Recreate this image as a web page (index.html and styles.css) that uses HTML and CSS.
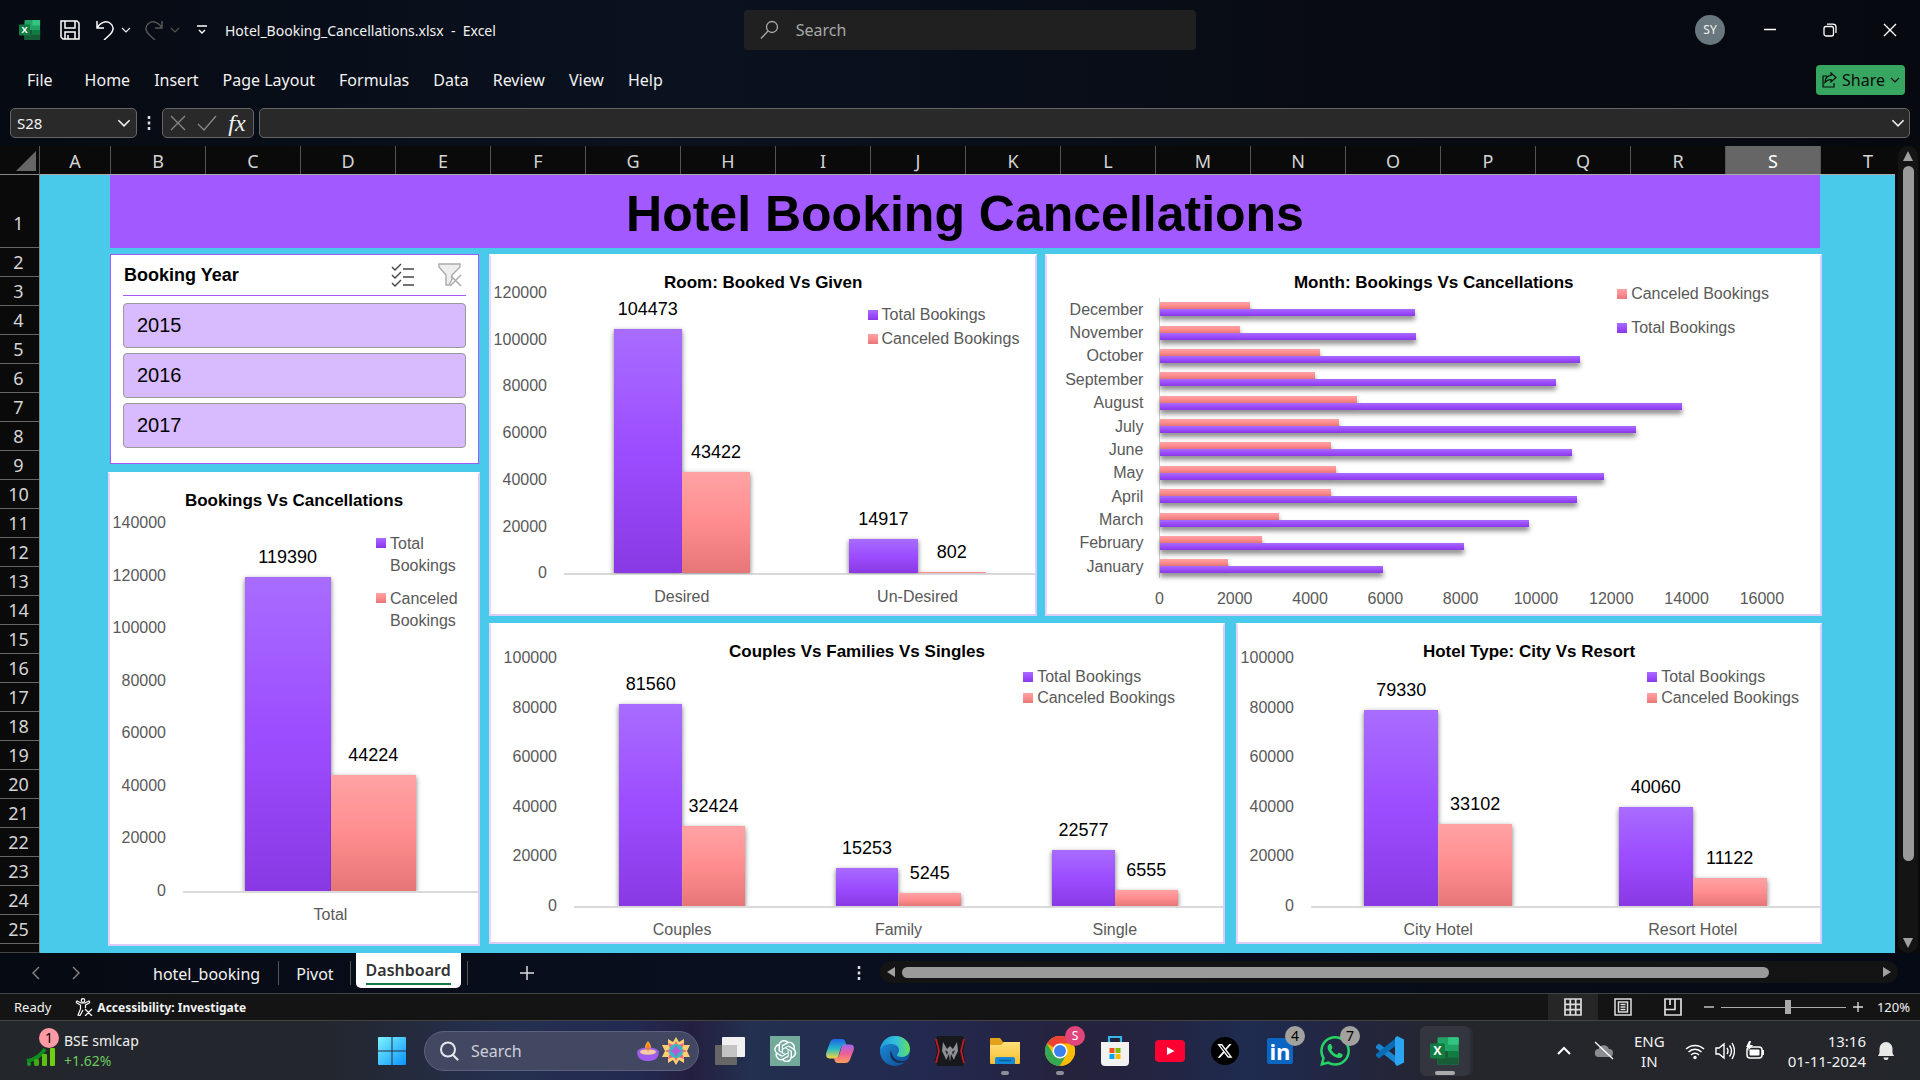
FILE: index.html
```html
<!DOCTYPE html>
<html lang="en">
<head>
<meta charset="utf-8">
<meta name="viewport" content="width=device-width, initial-scale=1">
<title>Hotel_Booking_Cancellations.xlsx - Excel</title>
<link rel="stylesheet" href="styles.css">
</head>
<body>
<svg class="defs" aria-hidden="true">
  <defs>
    <linearGradient id="gWin" x1="0" y1="0" x2="1" y2="1"><stop offset="0" stop-color="#7df3ff"/><stop offset="1" stop-color="#0a93ff"/></linearGradient>
    <linearGradient id="gEdge" x1="0" y1="0" x2="1" y2="0"><stop offset="0" stop-color="#1b9de2"/><stop offset=".55" stop-color="#35c1d8"/><stop offset="1" stop-color="#5fe05a"/></linearGradient>
    <linearGradient id="gEdge2" x1="0" y1="0" x2="1" y2="1"><stop offset="0" stop-color="#1f8fdc"/><stop offset="1" stop-color="#0b4a92"/></linearGradient>
    <linearGradient id="gCopA" x1="0" y1="0" x2="0" y2="1"><stop offset="0" stop-color="#1e66e8"/><stop offset=".5" stop-color="#26b8c8"/><stop offset="1" stop-color="#f5d63a"/></linearGradient>
    <linearGradient id="gCopB" x1="0" y1="0" x2="0" y2="1"><stop offset="0" stop-color="#a264f0"/><stop offset=".5" stop-color="#ee5f94"/><stop offset="1" stop-color="#ffa05c"/></linearGradient>
    <linearGradient id="gFold" x1="0" y1="0" x2="0" y2="1"><stop offset="0" stop-color="#ffe07a"/><stop offset="1" stop-color="#f8bd2e"/></linearGradient>
    <symbol id="excel" viewBox="0 0 24 24">
      <rect x="6" y="1" width="17" height="22" rx="1" fill="#21a366"/>
      <path d="M14.500 1H22a1 1 0 0 1 1 1v5h-8.500z" fill="#33c481"/>
      <path d="M6 12h8.500v5H6z" fill="#185c37"/><path d="M14.500 12H23v5h-8.500z" fill="#107c41"/>
      <path d="M6 17h17v5a1 1 0 0 1-1 1H7a1 1 0 0 1-1-1z" fill="#185c37"/>
      <rect x="0" y="6" width="12" height="12" rx="1" fill="#107c41"/>
      <text x="6" y="15.500" text-anchor="middle" font-family="Open Sans, sans-serif" font-size="10" font-weight="700" fill="#fff">X</text>
    </symbol>
    <symbol id="chev" viewBox="0 0 10 10"><path d="M1 3 5 7l4-4" fill="none" stroke="currentColor" stroke-width="1.100"/></symbol>
  </defs>
</svg>

<header class="titlebar">
  <div class="quick">
    <svg class="i22" viewBox="0 0 24 24" aria-hidden="true"><use href="#excel"/></svg>
    <button class="tool save" aria-label="Save"><svg class="i20" viewBox="0 0 20 20"><path d="M1 1h16l2 2v16H3l-2-2zM5 1v7h10V1M5 19v-7h10v7M8 19v-4" fill="none" stroke="#fff" stroke-width="1.500"/></svg></button>
    <button class="tool undo" aria-label="Undo"><svg class="i20" viewBox="0 0 20 20"><path d="M2 1v7h7M2 8C5 2.500 11 0 15.500 3.500S18 12 14.500 15L9 20" fill="none" stroke="#fff" stroke-width="1.500"/></svg><svg class="i10"><use href="#chev"/></svg></button>
    <button class="tool redo" aria-label="Redo" disabled><svg class="i20" viewBox="0 0 20 20"><path d="M18 1v7h-7M18 8C15 2.500 9 0 4.500 3.500S2 12 5.500 15l5.500 5" fill="none" stroke="currentColor" stroke-width="1.500"/></svg><svg class="i10"><use href="#chev"/></svg></button>
    <button class="tool more" aria-label="Customize toolbar"><svg class="i10" viewBox="0 0 10 10"><path d="M0 1h10M2 5l3 3 3-3" fill="none" stroke="#fff" stroke-width="1.400"/></svg></button>
    <h1 class="doc">Hotel_Booking_Cancellations.xlsx&nbsp; -&nbsp; Excel</h1>
  </div>
  <label class="search">
    <svg class="i20" viewBox="0 0 20 20"><circle cx="12" cy="7" r="5.500" fill="none" stroke="#aaa" stroke-width="1.300"/><path d="M8 11 1 18.500" stroke="#aaa" stroke-width="1.300"/></svg>
    <input type="text" placeholder="Search" aria-label="Search">
  </label>
  <div class="window">
    <span class="avatar">SY</span>
    <button aria-label="Minimize"><svg class="i14" viewBox="0 0 14 14"><path d="M1 6.500h12" stroke="#fff" stroke-width="1.500"/></svg></button>
    <button aria-label="Restore"><svg class="i14" viewBox="0 0 14 14"><rect x="1" y="3.500" width="9.500" height="9.500" rx="2" fill="none" stroke="#fff" stroke-width="1.300"/><path d="M4 1.200h6A3 3 0 0 1 13 4v6" fill="none" stroke="#fff" stroke-width="1.300"/></svg></button>
    <button aria-label="Close"><svg class="i14" viewBox="0 0 14 14"><path d="m1 1 12 12M13 1 1 13" stroke="#fff" stroke-width="1.400"/></svg></button>
  </div>
</header>

<nav class="ribbon">
  <a href="#file" class="file">File</a><a href="#home">Home</a><a href="#insert">Insert</a><a href="#layout">Page Layout</a><a href="#formulas">Formulas</a><a href="#data">Data</a><a href="#review">Review</a><a href="#view">View</a><a href="#help">Help</a>
  <button class="share"><svg class="i16" viewBox="0 0 16 16"><path d="M6 4H2v11h11v-4M10 1l5 4.500L10 10V7.500c-3 0-4.500 1-6 3C4 6 6.500 3.500 10 3.500z" fill="none" stroke="#0a0a0a" stroke-width="1.200"/></svg>Share<svg class="i10"><use href="#chev"/></svg></button>
</nav>

<div class="formula">
  <label class="namebox"><input type="text" value="S28" aria-label="Name box"><svg class="i14"><use href="#chev"/></svg></label>
  <svg class="dots" viewBox="0 0 4 16" aria-hidden="true"><path d="M2 1v3M2 6.500v3M2 12v3" stroke="#ddd" stroke-width="2.500"/></svg>
  <div class="fxbox">
    <button aria-label="Cancel"><svg class="i16" viewBox="0 0 16 16"><path d="m1 1 14 14M15 1 1 15" stroke="#888" stroke-width="1.300"/></svg></button>
    <button aria-label="Enter"><svg class="i20" viewBox="0 0 20 20"><path d="m1 11 6 6L19 3" fill="none" stroke="#888" stroke-width="1.300"/></svg></button>
    <button class="fx" aria-label="Insert function">fx</button>
  </div>
  <label class="fbar"><input type="text" aria-label="Formula bar"><svg class="i14"><use href="#chev"/></svg></label>
</div>

<main class="workspace">
  <div class="corner"><svg viewBox="0 0 20 20" class="i20"><path d="M20 0v20H0z" fill="#666"/></svg></div>
  <div class="cols"><span>A</span><span>B</span><span>C</span><span>D</span><span>E</span><span>F</span><span>G</span><span>H</span><span>I</span><span>J</span><span>K</span><span>L</span><span>M</span><span>N</span><span>O</span><span>P</span><span>Q</span><span>R</span><span class="on">S</span><span class="last">T</span></div>
  <div class="rows"><span class="first">1</span><span>2</span><span>3</span><span>4</span><span>5</span><span>6</span><span>7</span><span>8</span><span>9</span><span>10</span><span>11</span><span>12</span><span>13</span><span>14</span><span>15</span><span>16</span><span>17</span><span>18</span><span>19</span><span>20</span><span>21</span><span>22</span><span>23</span><span>24</span><span>25</span><span>26</span></div>

  <section class="sheet">
    <h2 class="banner">Hotel Booking Cancellations</h2>
    <div class="board">
      <div class="left">
        <section class="slicer">
          <header><h3>Booking Year</h3>
            <button aria-label="Multi-select"><svg class="i24" viewBox="0 0 24 24"><path d="m1 4 3 3 6-6M1 12l3 3 6-6M1 20l3 3 6-6M12 6h11M12 14h11M12 22h11" fill="none" stroke="#444" stroke-width="1.400"/></svg></button>
            <button aria-label="Clear filter"><svg class="i24" viewBox="0 0 24 24"><path d="M1 1h21v3l-8 8v4l-3 6H8V12L1 4z" fill="#eee" stroke="#aaa" stroke-width="1.400"/><path d="m13 13 10 10M23 12 12 23" stroke="#aaa" stroke-width="1.500"/></svg></button>
          </header>
          <button class="year">2015</button><button class="year">2016</button><button class="year">2017</button>
        </section>
        <figure class="chart tall">
          <figcaption>Bookings Vs Cancellations</figcaption>
          <ul class="legend"><li class="t">Total Bookings</li><li class="c">Canceled Bookings</li></ul>
          <div class="plot">
            <div class="axis"><span>140000</span><span>120000</span><span>100000</span><span>80000</span><span>60000</span><span>40000</span><span>20000</span><span>0</span></div>
            <div class="area">
              <div class="group"><div class="col"><b>119390</b><i class="bar t" style="height:85.280%"></i></div><div class="col"><b>44224</b><i class="bar c" style="height:31.590%"></i></div></div>
            </div>
            <div class="cats"><span>Total</span></div>
          </div>
        </figure>
      </div>
      <div class="right">
        <div class="row top">
          <figure class="chart room">
            <figcaption>Room: Booked Vs Given</figcaption>
            <ul class="legend"><li class="t">Total Bookings</li><li class="c">Canceled Bookings</li></ul>
            <div class="plot">
              <div class="axis"><span>120000</span><span>100000</span><span>80000</span><span>60000</span><span>40000</span><span>20000</span><span>0</span></div>
              <div class="area">
                <div class="group"><div class="col"><b>104473</b><i class="bar t" style="height:87.060%"></i></div><div class="col"><b>43422</b><i class="bar c" style="height:36.190%"></i></div></div>
                <div class="group"><div class="col"><b>14917</b><i class="bar t" style="height:12.430%"></i></div><div class="col"><b>802</b><i class="bar c" style="height:.670%"></i></div></div>
              </div>
              <div class="cats"><span>Desired</span><span>Un-Desired</span></div>
            </div>
          </figure>
          <figure class="chart month">
            <figcaption>Month: Bookings Vs Cancellations</figcaption>
            <ul class="legend"><li class="c">Canceled Bookings</li><li class="t">Total Bookings</li></ul>
            <div class="hplot">
              <div class="months"><span>December</span><span>November</span><span>October</span><span>September</span><span>August</span><span>July</span><span>June</span><span>May</span><span>April</span><span>March</span><span>February</span><span>January</span></div>
              <div class="hbars">
                <div><i class="hb c" style="width:14.820%"></i><i class="hb t" style="width:42.380%"></i></div>
                <div><i class="hb c" style="width:13.260%"></i><i class="hb t" style="width:42.460%"></i></div>
                <div><i class="hb c" style="width:26.540%"></i><i class="hb t" style="width:69.750%"></i></div>
                <div><i class="hb c" style="width:25.730%"></i><i class="hb t" style="width:65.680%"></i></div>
                <div><i class="hb c" style="width:32.740%"></i><i class="hb t" style="width:86.730%"></i></div>
                <div><i class="hb c" style="width:29.640%"></i><i class="hb t" style="width:79.130%"></i></div>
                <div><i class="hb c" style="width:28.340%"></i><i class="hb t" style="width:68.370%"></i></div>
                <div><i class="hb c" style="width:29.230%"></i><i class="hb t" style="width:73.690%"></i></div>
                <div><i class="hb c" style="width:28.280%"></i><i class="hb t" style="width:69.310%"></i></div>
                <div><i class="hb c" style="width:19.680%"></i><i class="hb t" style="width:61.210%"></i></div>
                <div><i class="hb c" style="width:16.850%"></i><i class="hb t" style="width:50.430%"></i></div>
                <div><i class="hb c" style="width:11.290%"></i><i class="hb t" style="width:37.060%"></i></div>
              </div>
              <div class="scale"><span>0</span><span>2000</span><span>4000</span><span>6000</span><span>8000</span><span>10000</span><span>12000</span><span>14000</span><span>16000</span></div>
            </div>
          </figure>
        </div>
        <div class="row bottom">
          <figure class="chart low wide">
            <figcaption>Couples Vs Families Vs Singles</figcaption>
            <ul class="legend"><li class="t">Total Bookings</li><li class="c">Canceled Bookings</li></ul>
            <div class="plot">
              <div class="axis"><span>100000</span><span>80000</span><span>60000</span><span>40000</span><span>20000</span><span>0</span></div>
              <div class="area">
                <div class="group"><div class="col"><b>81560</b><i class="bar t" style="height:81.560%"></i></div><div class="col"><b>32424</b><i class="bar c" style="height:32.420%"></i></div></div>
                <div class="group"><div class="col"><b>15253</b><i class="bar t" style="height:15.250%"></i></div><div class="col"><b>5245</b><i class="bar c" style="height:5.250%"></i></div></div>
                <div class="group"><div class="col"><b>22577</b><i class="bar t" style="height:22.580%"></i></div><div class="col"><b>6555</b><i class="bar c" style="height:6.560%"></i></div></div>
              </div>
              <div class="cats"><span>Couples</span><span>Family</span><span>Single</span></div>
            </div>
          </figure>
          <figure class="chart low hotel">
            <figcaption>Hotel Type: City Vs Resort</figcaption>
            <ul class="legend"><li class="t">Total Bookings</li><li class="c">Canceled Bookings</li></ul>
            <div class="plot">
              <div class="axis"><span>100000</span><span>80000</span><span>60000</span><span>40000</span><span>20000</span><span>0</span></div>
              <div class="area">
                <div class="group"><div class="col"><b>79330</b><i class="bar t" style="height:79.330%"></i></div><div class="col"><b>33102</b><i class="bar c" style="height:33.100%"></i></div></div>
                <div class="group"><div class="col"><b>40060</b><i class="bar t" style="height:40.060%"></i></div><div class="col"><b>11122</b><i class="bar c" style="height:11.120%"></i></div></div>
              </div>
              <div class="cats"><span>City Hotel</span><span>Resort Hotel</span></div>
            </div>
          </figure>
        </div>
      </div>
    </div>
  </section>

  <div class="vscroll"><svg class="i12" viewBox="0 0 12 12"><path d="m6 1 5 10H1z" fill="#a0a0a0"/></svg><span class="thumb"></span><svg class="i12" viewBox="0 0 12 12"><path d="m6 11 5-10H1z" fill="#a0a0a0"/></svg></div>
</main>

<nav class="tabs">
  <div class="tabnav">
    <button aria-label="Previous sheet"><svg class="i14" viewBox="0 0 14 14"><path d="M10 1 4 7l6 6" fill="none" stroke="#888" stroke-width="1.400"/></svg></button>
    <button aria-label="Next sheet"><svg class="i14" viewBox="0 0 14 14"><path d="m4 1 6 6-6 6" fill="none" stroke="#888" stroke-width="1.400"/></svg></button>
  </div>
  <a href="#hotel_booking">hotel_booking</a><a href="#pivot">Pivot</a><a href="#dashboard" class="active"><span>Dashboard</span></a>
  <button class="add" aria-label="New sheet"><svg class="i14" viewBox="0 0 14 14"><path d="M7 0v14M0 7h14" stroke="#ddd" stroke-width="1.500"/></svg></button>
  <svg class="dots grip" viewBox="0 0 4 16" aria-hidden="true"><path d="M2 1v3M2 6.500v3M2 12v3" stroke="#ddd" stroke-width="2.500"/></svg>
  <div class="hscroll"><svg class="i12" viewBox="0 0 12 12"><path d="m2 6 8-5v10z" fill="#a0a0a0"/></svg><span class="track"><span class="thumb"></span></span><svg class="i12" viewBox="0 0 12 12"><path d="M10 6 2 1v10z" fill="#a0a0a0"/></svg></div>
</nav>

<footer class="status">
  <span>Ready</span>
  <button class="access"><svg class="i18" viewBox="0 0 18 18"><circle cx="8" cy="2.500" r="1.800" fill="none" stroke="#fff" stroke-width="1.200"/><path d="M1 4.500 5.500 7v4L3 17l2 .5 3-5.500M15 4.500 10.500 7v3M1 4.500 2 3l4 2h4l4-2 1 1.500M10 11l7 7M17 11l-7 7" fill="none" stroke="#fff" stroke-width="1.200"/></svg>Accessibility: Investigate</button>
  <div class="views">
    <button class="on" aria-label="Normal view"><svg class="i18" viewBox="0 0 18 18"><path d="M1 1h16v16H1zM1 6.300h16M1 11.700h16M6.300 1v16M11.700 1v16" fill="none" stroke="#ddd" stroke-width="1.700"/></svg></button>
    <button aria-label="Page layout view"><svg class="i18" viewBox="0 0 18 18"><path d="M1 1h16v16H1zM4.500 4h9v10h-9zM6.500 6.500h5M6.500 9h5M6.500 11.500h5" fill="none" stroke="#ddd" stroke-width="1.500"/></svg></button>
    <button aria-label="Page break view"><svg class="i18" viewBox="0 0 18 18"><path d="M1 1h16v16H1zM1 11.500h10V1M6 1v6" fill="none" stroke="#ddd" stroke-width="1.700"/></svg></button>
  </div>
  <div class="zoom">
    <button aria-label="Zoom out"><svg class="i10" viewBox="0 0 10 10"><path d="M0 5h10" stroke="#ddd" stroke-width="1.300"/></svg></button>
    <input type="range" min="0" max="100" value="54" aria-label="Zoom">
    <button aria-label="Zoom in"><svg class="i10" viewBox="0 0 10 10"><path d="M0 5h10M5 0v10" stroke="#ddd" stroke-width="1.300"/></svg></button>
  </div>
  <span class="pct">120%</span>
</footer>

<div class="taskbar">
  <a href="#widgets" class="stock">
    <span class="app"><svg viewBox="0 0 32 32" class="i32"><path d="M2 26q12-2 18-12" fill="none" stroke="#128c1c" stroke-width="4"/><rect x="2" y="27" width="4" height="4" rx="2" fill="#14a01c"/><rect x="9" y="24" width="5" height="7" rx="2" fill="#3fae12"/><rect x="17" y="19" width="5" height="12" rx="1" fill="#5cc010"/><rect x="25" y="13" width="5" height="18" rx="1" fill="#6fd010"/></svg><em class="badge pink">1</em></span>
    <span class="quote"><span>BSE smlcap</span><span class="up">+1.62%</span></span>
  </a>
  <div class="dock">
    <button class="app start" aria-label="Start"><svg class="i30" viewBox="0 0 30 30"><path d="M1 2a1 1 0 0 1 1-1h12.500v13.500H1zM15.500 1H28a1 1 0 0 1 1 1v12.500H15.500zM1 15.500h13.500V29H2a1 1 0 0 1-1-1zM15.500 15.500H29V28a1 1 0 0 1-1 1H15.500z" fill="url(#gWin)"/></svg></button>
    <label class="tsearch"><svg class="i20" viewBox="0 0 20 20"><circle cx="9" cy="8.500" r="7" fill="none" stroke="#e6e6ec" stroke-width="2"/><path d="m14 14 4.500 4.500" stroke="#e6e6ec" stroke-width="2.200" stroke-linecap="round"/></svg>
      <input type="text" placeholder="Search" aria-label="Search Windows">
      <svg class="diya" viewBox="0 0 54 28" aria-hidden="true"><path d="M12 4c4 5 4 9 0 10-4-1-4-5 0-10z" fill="#ffa52c"/><ellipse cx="12" cy="15" rx="11" ry="4.500" fill="#9a63e0"/><ellipse cx="12" cy="15" rx="8" ry="2.700" fill="#f7cba6"/><path d="M1 16c1 6 5 8 11 8s10-2 11-8c-5 4-17 4-22 0z" fill="#a45cf0"/><path d="M12 6c2 4 2 7 0 8-2-1-2-4 0-8z" fill="#ff7a1c"/>
        <path d="m40 0 3 5 5-3 0 6 6 0-3 6 3 6-6 0 0 6-5-3-3 5-3-5-5 3 0-6-6 0 3-6-3-6 6 0 0-6 5 3z" fill="#ffd071"/><path d="m40 4 2 4 6-2-2 6 5 2-5 2 2 6-6-2-2 4-2-4-6 2 2-6-5-2 5-2-2-6 6 2z" fill="#f0688a"/><circle cx="40" cy="14" r="7" fill="#32b9c4"/><path d="m40 8 2 4 4 2-4 2-2 4-2-4-4-2 4-2z" fill="#d050c8"/><circle cx="40" cy="14" r="3" fill="#b45ce0"/></svg></label>
    <button class="app" aria-label="Task view"><svg class="i30" viewBox="0 0 30 30"><rect x="0" y="9" width="22" height="20" rx="1" fill="#666"/><rect x="7" y="1" width="23" height="20" rx="1" fill="#f1f1f1"/><path d="M7 9h15v12H7z" fill="#c4c4c4"/></svg></button>
    <button class="app" aria-label="ChatGPT"><svg class="i30" viewBox="0 0 30 30"><path d="M0 0h30v30H0z" fill="#74aa9c"/><g transform="translate(4.200 4) scale(.92)"><path fill="#fff" d="M22.282 9.821a5.985 5.985 0 0 0-.516-4.911 6.046 6.046 0 0 0-6.510-2.900A6.065 6.065 0 0 0 4.981 4.182a5.985 5.985 0 0 0-3.998 2.900 6.046 6.046 0 0 0 .743 7.097 5.980 5.980 0 0 0 .511 4.911 6.051 6.051 0 0 0 6.515 2.900A5.985 5.985 0 0 0 13.260 24a6.056 6.056 0 0 0 5.772-4.206 5.989 5.989 0 0 0 3.998-2.900 6.056 6.056 0 0 0-.748-7.073zm-9.022 12.608a4.476 4.476 0 0 1-2.876-1.041l.142-.080 4.778-2.758a.795.795 0 0 0 .393-.681v-6.737l2.020 1.169a.071.071 0 0 1 .038.052v5.583a4.504 4.504 0 0 1-4.495 4.494zm-9.661-4.125a4.471 4.471 0 0 1-.535-3.014l.142.085 4.783 2.758a.771.771 0 0 0 .781 0l5.843-3.369v2.332a.080.080 0 0 1-.033.062L9.740 19.950a4.499 4.499 0 0 1-6.141-1.646zM2.341 7.896a4.485 4.485 0 0 1 2.366-1.973V11.600a.766.766 0 0 0 .388.677l5.814 3.354-2.020 1.169a.076.076 0 0 1-.071 0l-4.830-2.787A4.504 4.504 0 0 1 2.341 7.872zm16.596 3.856L13.104 8.364 15.119 7.200a.076.076 0 0 1 .071 0l4.830 2.791a4.494 4.494 0 0 1-.677 8.104v-5.677a.790.790 0 0 0-.407-.667zm2.011-3.023l-.142-.085-4.774-2.782a.776.776 0 0 0-.785 0L9.409 9.230V6.897a.066.066 0 0 1 .028-.062l4.830-2.787a4.499 4.499 0 0 1 6.680 4.660zM8.307 12.863l-2.020-1.164a.080.080 0 0 1-.038-.057V6.074a4.499 4.499 0 0 1 7.376-3.454l-.142.081L8.704 5.459a.795.795 0 0 0-.393.681zm1.098-2.365l2.602-1.500 2.607 1.500v2.999l-2.597 1.500-2.607-1.500Z"/></g></svg></button>
    <button class="app" aria-label="Copilot"><svg class="i30" viewBox="0 0 30 30"><path d="M10 3h7c2 0 3 1 3.500 3l1 3h-2c-2 0-3 1-4 4l-2 7c-.5 2-1.500 2.500-3.500 2.500H5C1 22.500.5 19 1.500 16L5 6.500C6 4 7.500 3 10 3z" fill="url(#gCopA)"/><path d="M20 27h-7c-2 0-3-1-3.500-3l-.5-2h1.500c2 0 3-1 4-4l2-7c.500-2 1.500-2.500 3.500-2.500H25c4 0 4.500 3 3.500 6L25 23.500c-1 2.500-2.500 3.500-5 3.500z" fill="url(#gCopB)"/></svg></button>
    <button class="app" aria-label="Edge"><svg class="i30" viewBox="0 0 30 30"><circle cx="15" cy="15" r="15" fill="url(#gEdge2)"/><path d="M0 14C1 6 7 0 15 0c9 0 15 6 15 13 0 5-4 8-8 8-3 0-5-1-5-2s2-2 2-5c0-4-4-6-8-6-5 0-9 2-11 6z" fill="url(#gEdge)"/><path d="M11 14c-2 5 0 12 8 13 4 .5 7-1 8-3-2 1-4 1.500-7 1-5-1-8-4-9-11z" fill="#1b2a52"/></svg></button>
    <button class="app" aria-label="PredatorSense"><svg class="i30" viewBox="0 0 30 30"><path d="M2 0h26l2 6-2 9 2 9-2 6H2l-2-6 2-9-2-9z" fill="#17181c"/><path d="m1 3 3 12-3 12M29 3l-3 12 3 12" stroke="#c21a22" stroke-width="1.800" fill="none"/><path d="m8 6 4 7 3-3 3 3 4-7 1 9-3 6-1 3-3-6-1 8-1-8-3 6-1-3-3-6z" fill="#8d9096"/><path d="m10 14 3 2-1 3zM20 14l-3 2 1 3z" fill="#222"/></svg></button>
    <button class="app run" aria-label="File Explorer"><svg class="i30" viewBox="0 0 30 30"><path d="M0 3a1 1 0 0 1 1-1h9l3 4h16a1 1 0 0 1 1 1v4H0z" fill="#e3a21a"/><path d="M0 9h11l3-3h16v21a1 1 0 0 1-1 1H1a1 1 0 0 1-1-1z" fill="url(#gFold)"/><path d="M5 28v-5a2 2 0 0 1 2-2h16a2 2 0 0 1 2 2v5z" fill="#1489d8"/><path d="M9 24.500h12" stroke="#0b5c9c" stroke-width="1.500"/></svg></button>
    <button class="app run" aria-label="Chrome"><svg class="i30" viewBox="0 0 30 30"><circle cx="15" cy="15" r="15" fill="#fbbc05"/><path d="M15 15 2 7.500A15 15 0 0 1 28 7.500H15z" fill="#ea4335"/><path d="M15 15 8.500 18.800 2 7.500A15 15 0 0 0 15 30l6.500-11.200z" fill="#34a853"/><path d="M28 7.500A15 15 0 0 1 15 30l6.500-11.200L22 9z" fill="#fbbc05"/><circle cx="15" cy="15" r="7.500" fill="#fff"/><circle cx="15" cy="15" r="6" fill="#3b82f0"/></svg><em class="badge rose">S</em></button>
    <button class="app" aria-label="Microsoft Store"><svg class="i30" viewBox="0 0 30 30"><path d="M9 6V1h12v5" fill="none" stroke="#35b5ea" stroke-width="2.200"/><path d="M1 6h28v20a4 4 0 0 1-4 4H5a4 4 0 0 1-4-4z" fill="#f2f2f2"/><path d="M9.500 12h5v5h-5z" fill="#f25022"/><path d="M15.500 12h5v5h-5z" fill="#7fba00"/><path d="M9.500 18h5v5h-5z" fill="#00a4ef"/><path d="M15.500 18h5v5h-5z" fill="#ffb900"/></svg></button>
    <button class="app" aria-label="YouTube"><svg class="i30" viewBox="0 0 30 30"><rect y="4" width="30" height="22" rx="4" fill="#f03"/><path d="m12 11 7.500 4-7.500 4z" fill="#fff"/></svg></button>
    <button class="app" aria-label="X"><svg class="i30" viewBox="0 0 30 30"><circle cx="15" cy="15" r="14" fill="#000"/><g transform="translate(6.500 6.500) scale(.7)"><path d="M18.244 2.250h3.308l-7.227 8.260 8.502 11.240H16.170l-5.214-6.817L4.990 21.750H1.680l7.730-8.835L1.254 2.250H8.080l4.713 6.231zm-1.161 17.520h1.833L7.084 4.126H5.117z" fill="#fff"/></g></svg></button>
    <button class="app" aria-label="LinkedIn"><svg class="i30" viewBox="0 0 30 30"><rect x="2" y="2" width="26" height="26" rx="2" fill="#0a66c2"/><text x="15" y="24" text-anchor="middle" font-family="Open Sans, sans-serif" font-weight="700" font-size="22" fill="#fff">in</text></svg><em class="badge">4</em></button>
    <button class="app" aria-label="WhatsApp"><svg class="i30" viewBox="0 0 24 24"><path fill="#25d366" d="M17.472 14.382c-.297-.149-1.758-.867-2.030-.967-.273-.099-.471-.148-.670.150-.197.297-.767.966-.940 1.164-.173.199-.347.223-.644.075-.297-.150-1.255-.463-2.390-1.475-.883-.788-1.480-1.761-1.653-2.059-.173-.297-.018-.458.130-.606.134-.133.298-.347.446-.520.149-.174.198-.298.298-.497.099-.198.050-.371-.025-.520-.075-.149-.669-1.612-.916-2.207-.242-.579-.487-.500-.669-.510-.173-.008-.371-.010-.570-.010-.198 0-.520.074-.792.372-.272.297-1.040 1.016-1.040 2.479 0 1.462 1.065 2.875 1.213 3.074.149.198 2.096 3.200 5.077 4.487.709.306 1.262.489 1.694.625.712.227 1.360.195 1.871.118.571-.085 1.758-.719 2.006-1.413.248-.694.248-1.289.173-1.413-.074-.124-.272-.198-.570-.347m-5.421 7.403h-.004a9.870 9.870 0 0 1-5.031-1.378l-.361-.214-3.741.982.998-3.648-.235-.374a9.860 9.860 0 0 1-1.510-5.260c.001-5.450 4.436-9.884 9.888-9.884 2.640 0 5.122 1.030 6.988 2.898a9.825 9.825 0 0 1 2.893 6.994c-.003 5.450-4.437 9.884-9.885 9.884m8.413-18.297A11.815 11.815 0 0 0 12.050 0C5.495 0 .160 5.335.157 11.892c0 2.096.547 4.142 1.588 5.945L.057 24l6.305-1.654a11.882 11.882 0 0 0 5.683 1.448h.005c6.554 0 11.890-5.335 11.893-11.893a11.821 11.821 0 0 0-3.480-8.413z"/></svg><em class="badge">7</em></button>
    <button class="app" aria-label="Visual Studio Code"><svg class="i30" viewBox="0 0 30 30"><path d="M1 10 4 7.500 23 22v7.500L1 12z" fill="#1a86cf"/><path d="M1 20l3 2.500L23 8V.5L1 18z" fill="#0a6cb5"/><path d="M22 0l7 3.500v23L22 30l-2-2V2z" fill="#2ba4f2"/></svg></button>
    <button class="app run current" aria-label="Excel"><svg class="i30"><use href="#excel"/></svg></button>
  </div>
  <div class="tray">
    <svg class="i20" viewBox="0 0 20 20"><path d="m4 13 6-6 6 6" fill="none" stroke="#fff" stroke-width="2"/></svg>
    <svg class="i20 cloud" viewBox="0 0 20 20"><path d="M5 16a4 4 0 0 1-.5-8A5.500 5.500 0 0 1 15 8a4 4 0 0 1 0 8z" fill="#8a8c90"/><path d="m1 1 18 17" stroke="#fff" stroke-width="1.300"/></svg>
    <span class="lang">ENG<br>IN</span>
    <svg class="i20 wifi" viewBox="0 0 20 20"><path d="M1 8a13 13 0 0 1 18 0M3.500 11a9 9 0 0 1 13 0M6 14a5.500 5.500 0 0 1 8 0" fill="none" stroke="#fff" stroke-width="1.500"/><circle cx="10" cy="16.500" r="1.700" fill="#fff"/></svg>
    <svg class="i20" viewBox="0 0 20 20"><path d="M1 7h3l5-4v14l-5-4H1zM12 7q2 3 0 6M14.500 4.500q4 5.500 0 11M17 2q5 8 0 16" fill="none" stroke="#fff" stroke-width="1.400"/></svg>
    <svg class="i20 batt" viewBox="0 0 20 20"><rect x="2" y="6" width="15" height="11" rx="3" fill="none" stroke="#fff" stroke-width="1.500"/><path d="M18 9v5" stroke="#fff" stroke-width="2"/><rect x="4.500" y="8.500" width="10" height="6" rx="1" fill="#fff"/><path d="m4 0-3 6h3l-1 4 5-6H5l1-4z" fill="#fff"/></svg>
    <span class="clock">13:16<br>01-11-2024</span>
    <svg class="i20 bell" viewBox="0 0 20 20"><path d="M10 1a6.500 6.500 0 0 1 6.500 6.500V12l1.500 3H2l1.500-3V7.500A6.500 6.500 0 0 1 10 1zM7.500 16.500h5a2.500 2.500 0 0 1-5 0z" fill="#e8e8e8"/></svg>
  </div>
</div>
</body>
</html>
```
FILE: styles.css
```css
:root {
  --purple: #a259ff;
  --cyan: #4acaeb;
  --bar-t: linear-gradient(#a86cff, #9c4dff 50%, #8939e3);
  --bar-c: linear-gradient(#ffa2a4, #ff8d8f 50%, #e57677);
}
* { box-sizing: border-box; }
body {
  margin: 0; min-height: 100vh; display: flex; flex-direction: column;
  font-family: "Noto Sans", "Open Sans", sans-serif; font-size: 16px; color: #f2f2f2;
  background: linear-gradient(90deg, #060a12, #0a1220 35%, #080b13 70%, #06090f);
  overflow-x: hidden;
}
button { border: 0; padding: 0; background: none; color: inherit; font: inherit; display: flex; align-items: center; justify-content: center; }
input { border: 0; padding: 0; background: none; color: inherit; font: inherit; min-width: 0; }
a { color: inherit; text-decoration: none; }
svg { display: block; flex: none; }
h1, h2, h3, figure, ul { margin: 0; padding: 0; }
.defs { position: absolute; width: 0; height: 0; }
.i10 { width: 10px; height: 10px; } .i12 { width: 12px; height: 12px; } .i14 { width: 14px; height: 14px; }
.i16 { width: 16px; height: 16px; } .i18 { width: 18px; height: 18px; } .i20 { width: 20px; height: 20px; }
.i22 { width: 22px; height: 22px; } .i24 { width: 24px; height: 24px; } .i30 { width: 30px; height: 30px; } .i32 { width: 32px; height: 32px; }

.titlebar { display: flex; align-items: center; height: 60px; padding: 0 15px 0 19px; }
.quick, .window { flex: 1 1 0; display: flex; align-items: center; }
.save { margin-left: 19px; }
.undo, .redo { gap: 6px; margin-left: 15px; }
.redo { margin-left: 13px; color: #555; }
.more { margin-left: 17px; }
.doc { margin-left: 18px; font-size: 14px; font-weight: 400; white-space: nowrap; }
.search { display: flex; align-items: center; gap: 16px; width: 24%; height: 40px; margin-left: 16px; padding: 0 16px; border-radius: 4px; background: #202020; }
.search input { flex: 1; }
.search input::placeholder { color: #a8a8a8; opacity: 1; }
.window { justify-content: flex-end; gap: 30px; }
.window button { width: 30px; height: 30px; }
.avatar { width: 30px; height: 30px; border-radius: 50%; background: #68777d; font-size: 12px; line-height: 30px; text-align: center; }

.ribbon { display: flex; align-items: center; height: 40px; padding: 0 15px 0 27px; gap: 32px; margin-bottom: 8px; white-space: nowrap; }
.ribbon a { margin-right: -8px; }
.ribbon .file { margin-right: 0; }
.share { gap: 5px; margin-left: auto; width: 89px; height: 30px; border-radius: 4px; background: #37a660; color: #0a0a0a; }

.formula { display: flex; align-items: center; height: 30px; padding: 0 10px; margin-bottom: 8px; }
.namebox, .fxbox, .fbar { display: flex; align-items: center; height: 30px; border: 1px solid #666; border-radius: 5px; background: #292929; }
.namebox { width: 127px; padding: 0 5px 0 6px; font-size: 15px; }
.namebox input { flex: 1; }
.dots { width: 4px; height: 16px; margin: 0 11px 0 10px; }
.fxbox { width: 92px; justify-content: space-around; padding: 0 2px; margin-right: 5px; }
.fx { font: italic 24px/24px "Liberation Serif", serif; }
.fbar { flex: 1; padding: 0 4px; }
.fbar input { flex: 1; }

.workspace { flex: 1; display: grid; grid-template-columns: 40px 1fr 25px; grid-template-rows: 29px 1fr; background: #0a0a0a; }
.corner { display: flex; align-items: flex-end; justify-content: flex-end; padding: 0 3px 3px 0; border-right: 1px solid #555; border-bottom: 1px solid #888; }
.cols { display: grid; grid-template-columns: 71fr repeat(18, 95fr) 74fr; border-bottom: 1px solid #aaa; font-size: 18px; line-height: 30px; color: #d4d4d4; text-align: center; overflow: hidden; }
.cols span { border-right: 1px solid #555; }
.cols .on { background: #666; border-bottom: 2px solid #1f7145; color: #fff; }
.cols .last { border: 0; padding-left: 20px; }
.rows { contain: size; overflow: hidden; display: flex; flex-direction: column; border-right: 1px solid #888; border-bottom: 1px solid #444; font-size: 18px; color: #d4d4d4; text-align: center; }
.rows span { flex: none; height: 29px; line-height: 29px; border-bottom: 1px solid #666; padding-right: 2px; }
.rows .first { height: 73px; padding-top: 34px; }
.sheet { grid-column: 2; display: flex; flex-direction: column; padding: 0 73px 7px 68px; background: var(--cyan); color: #000; font-family: "Liberation Sans", Arial, sans-serif; }
.banner { height: 73px; margin: 0 2px; background: var(--purple); font-size: 50px; line-height: 78px; font-weight: 700; text-align: center; white-space: nowrap; }
.board { flex: 1; display: grid; grid-template-columns: 372fr 1333fr; gap: 9px; margin-top: 6px; }
.left, .right { display: flex; flex-direction: column; min-width: 0; }
.left { gap: 8px; }
.right { gap: 7px; padding-bottom: 2px; }
.row { display: grid; }
.top { flex: 363 1 0; grid-template-columns: 548fr 776fr; gap: 8px; }
.bottom { flex: 321 1 0; grid-template-columns: 736fr 586fr; gap: 11px; }

.slicer { margin: 0 1px 0 2px; height: 210px; padding: 0 12px; border: 1px solid var(--purple); background: #fff; display: flex; flex-direction: column; gap: 5px; }
.slicer header { display: flex; align-items: center; gap: 23px; height: 41px; padding: 0 4px 0 1px; margin-bottom: 2px; border-bottom: 1px solid var(--purple); }
.slicer h3 { flex: 1; font-size: 18px; line-height: 41px; }
.year { justify-content: flex-start; height: 45px; padding-left: 13px; border: 1px solid #999; border-radius: 4px; background: #d8bbff; font-size: 20px; }

.chart { position: relative; display: flex; flex-direction: column; min-width: 0; background: #fff; border: 2px solid; border-color: #fff #dccbff #dccbff #e4d6ff; color: #595959; font-size: 16px; line-height: 20px; --axis: 73px; }
.chart figcaption { padding-top: 17px; height: 37px; font-size: 17px; font-weight: 700; color: #000; text-align: center; white-space: nowrap; }
.low figcaption { margin-bottom: -4px; }
.tall figcaption { margin-bottom: 12px; }
.tall { flex: 1; }
.tall .plot { margin-bottom: 12px; }
.wide { --axis: 83px; }
.plot { flex: 1; display: grid; grid-template-columns: var(--axis) 1fr; grid-template-rows: minmax(120px, 1fr) 41px; }
.low .plot { grid-template-rows: minmax(120px, 1fr) 36px; }
.axis { display: flex; flex-direction: column; justify-content: space-between; margin: -10px 0; padding-right: 17px; text-align: right; }
.area { display: flex; margin-bottom: -2px; border-bottom: 2px solid #d9d9d9; }
.group { flex: 1; display: flex; justify-content: center; }
.col { width: 29%; display: flex; flex-direction: column; justify-content: flex-end; align-items: center; }
.col b { margin-bottom: 10px; font-size: 18px; font-weight: 400; color: #000; }
.bar { flex: none; width: 100%; box-shadow: 0 2px 5px rgba(0, 0, 0, .55); clip-path: inset(-10px -10px 0 -10px); }
.col + .col .bar { clip-path: inset(-10px -10px 0 0); }
.bar.t, .hb.t, .legend .t::before { background: var(--bar-t); }
.bar.c, .hb.c, .legend .c::before { background: var(--bar-c); }
.cats { grid-column: 2; display: flex; padding-top: 14px; text-align: center; white-space: nowrap; }
.cats span { flex: 1; }

.legend { position: absolute; z-index: 1; list-style: none; display: flex; flex-direction: column; white-space: nowrap; }
.legend li { display: flex; gap: 4px; }
.legend li::before { content: ""; flex: none; width: 10px; height: 10px; margin-top: 5px; }
.tall .legend { top: 59px; right: 10px; width: 92px; gap: 11px; white-space: normal; line-height: 22px; }
.room .legend { top: 49px; right: 16px; gap: 4px; }
.month .legend { top: 28px; right: 51px; gap: 14px; }
.wide .legend { top: 42px; right: 48px; gap: 1px; }
.hotel .legend { top: 42px; right: 21px; gap: 1px; }

.hplot { flex: 1; display: grid; grid-template-columns: 112px 1fr; grid-template-rows: minmax(240px, 1fr) 36px; padding: 5px 58px 0 0; }
.months { display: grid; grid-auto-rows: 1fr; align-items: center; padding-right: 16px; text-align: right; line-height: 18px; }
.hbars { display: grid; grid-auto-rows: 1fr; border-left: 1px solid #d0d0d0; }
.hbars div { display: flex; flex-direction: column; justify-content: center; padding-bottom: 1px; }
.hb { height: 7px; box-shadow: 0 4px 5px rgba(0, 0, 0, .45); }
.hb.t { position: relative; }
.scale { grid-column: 2; display: flex; justify-content: space-between; padding-top: 11px; margin: 0 -30px; }
.scale span { width: 60px; text-align: center; }

.vscroll { display: flex; flex-direction: column; align-items: center; justify-content: space-between; grid-area: 1 / 3 / 3 / 4; margin: 0 2px 0 3px; padding: 4px 0; gap: 4px; border-radius: 10px; background: #141414; }
.vscroll .thumb { flex: 1; width: 11px; margin-bottom: 72px; border-radius: 6px; background: #9a9a9a; }

.tabs { display: flex; height: 40px; white-space: nowrap; background: linear-gradient(90deg, #060a12, #0a0f20 40%, #060a14); }
.tabnav { display: flex; align-items: center; gap: 26px; padding-left: 29px; margin-right: 52px; }
.tabs a { position: relative; padding: 0 18px; line-height: 42px; font-size: 16px; }
.tabs a + a::before { content: ""; position: absolute; left: 0; top: 8px; height: 24px; border-left: 1px solid #555; }
.tabs .active { height: 35px; margin: 0 6px 0 4px; padding: 0 10px; border-radius: 0 0 5px 5px; background: #fff; color: #333; line-height: 34px; font-weight: 600; }
.tabs .active::before { left: -6px; }
.active span { display: block; height: 32px; border-bottom: 2px solid #107c41; }
.add { border-left: 1px solid #555; margin: 8px 0; padding-left: 52px; }
.grip { margin: 12px 19px 0 auto; }
.hscroll { display: flex; align-items: center; gap: 5px; width: 53%; height: 22px; margin: 8px 22px 0 0; padding: 0 5px; border-radius: 11px; background: #141414; }
.track { flex: 1; }
.track .thumb { display: block; width: 89%; height: 11px; border-radius: 6px; background: #9a9a9a; }

.status { display: flex; align-items: center; height: 28px; border-top: 1px solid #444; border-bottom: 1px solid #444; padding: 0 10px 0 14px; background: #141414; font-size: 13px; }
.access { gap: 4px; margin-left: 24px; font-size: 12px; font-weight: 700; }
.views { display: flex; margin-left: auto; }
.views button { width: 50px; height: 26px; }
.views .on { background: #262626; }
.zoom { display: flex; align-items: center; gap: 7px; margin: 0 14px 0 6px; }
.zoom input { appearance: none; width: 125px; height: 15px; margin: 0; background: linear-gradient(#aaa, #aaa) center / 100% 1px no-repeat; }
.zoom input::-webkit-slider-thumb { appearance: none; width: 6px; height: 14px; background: #aaa; }

.taskbar { display: flex; align-items: center; height: 59px; padding: 0 24px 0 26px; background: linear-gradient(90deg, #23262b, #23262d 17%, #25304f 26%, #232a52 33%, #241f3f 36%, #23304f 39%, #232950 48%, #25223c 56%, #232440 60%, #1f2b50 65%, #23253d 71%, #25262b 76%, #23262b); }
.stock { display: flex; align-items: center; gap: 8px; width: 336px; }
.stock .app { width: 30px; }
.quote { display: flex; flex-direction: column; font-size: 14px; line-height: 20px; }
.up { color: #6ccb5f; }
.dock { display: flex; align-items: center; }
.app { position: relative; flex: none; width: 55px; height: 50px; display: flex; align-items: center; justify-content: center; }
.start { width: 60px; margin-right: 2px; }
.badge { position: absolute; top: 0; right: 2px; width: 20px; height: 20px; border-radius: 50%; background: #a3a19e; color: #000; font: 14px/20px "Noto Sans", sans-serif; text-align: center; }
.pink { background: #ff99a4; top: 2px; right: -3px; }
.rose { background: #e0457b; color: #fff; font-size: 12px; }
.run::after { content: ""; position: absolute; bottom: 1px; left: 24px; width: 8px; height: 4px; border-radius: 2px; background: #8d8f99; }
.current { width: 50px; margin-left: 3px; border-radius: 6px; background: #34363f; box-shadow: 4px 0 0 -1px #2b2d35; }
.current::after { left: 15px; width: 20px; background: #aaa; }
.tsearch { display: flex; align-items: center; gap: 12px; width: 275px; height: 40px; margin-right: 3px; padding: 0 8px 0 14px; border: 1px solid #5d6180; border-radius: 20px; background: #424862; }
.tsearch input { flex: 1; }
.tsearch input::placeholder { color: #cfd0da; opacity: 1; }
.diya { width: 54px; height: 28px; }
.tray { display: flex; align-items: center; justify-content: flex-end; gap: 10px; margin-left: auto; font-size: 15px; line-height: 20px; white-space: nowrap; }
.cloud { margin-left: 10px; }
.lang { margin: 0 10px; text-align: center; }
.clock { margin-left: 13px; text-align: right; }
```
